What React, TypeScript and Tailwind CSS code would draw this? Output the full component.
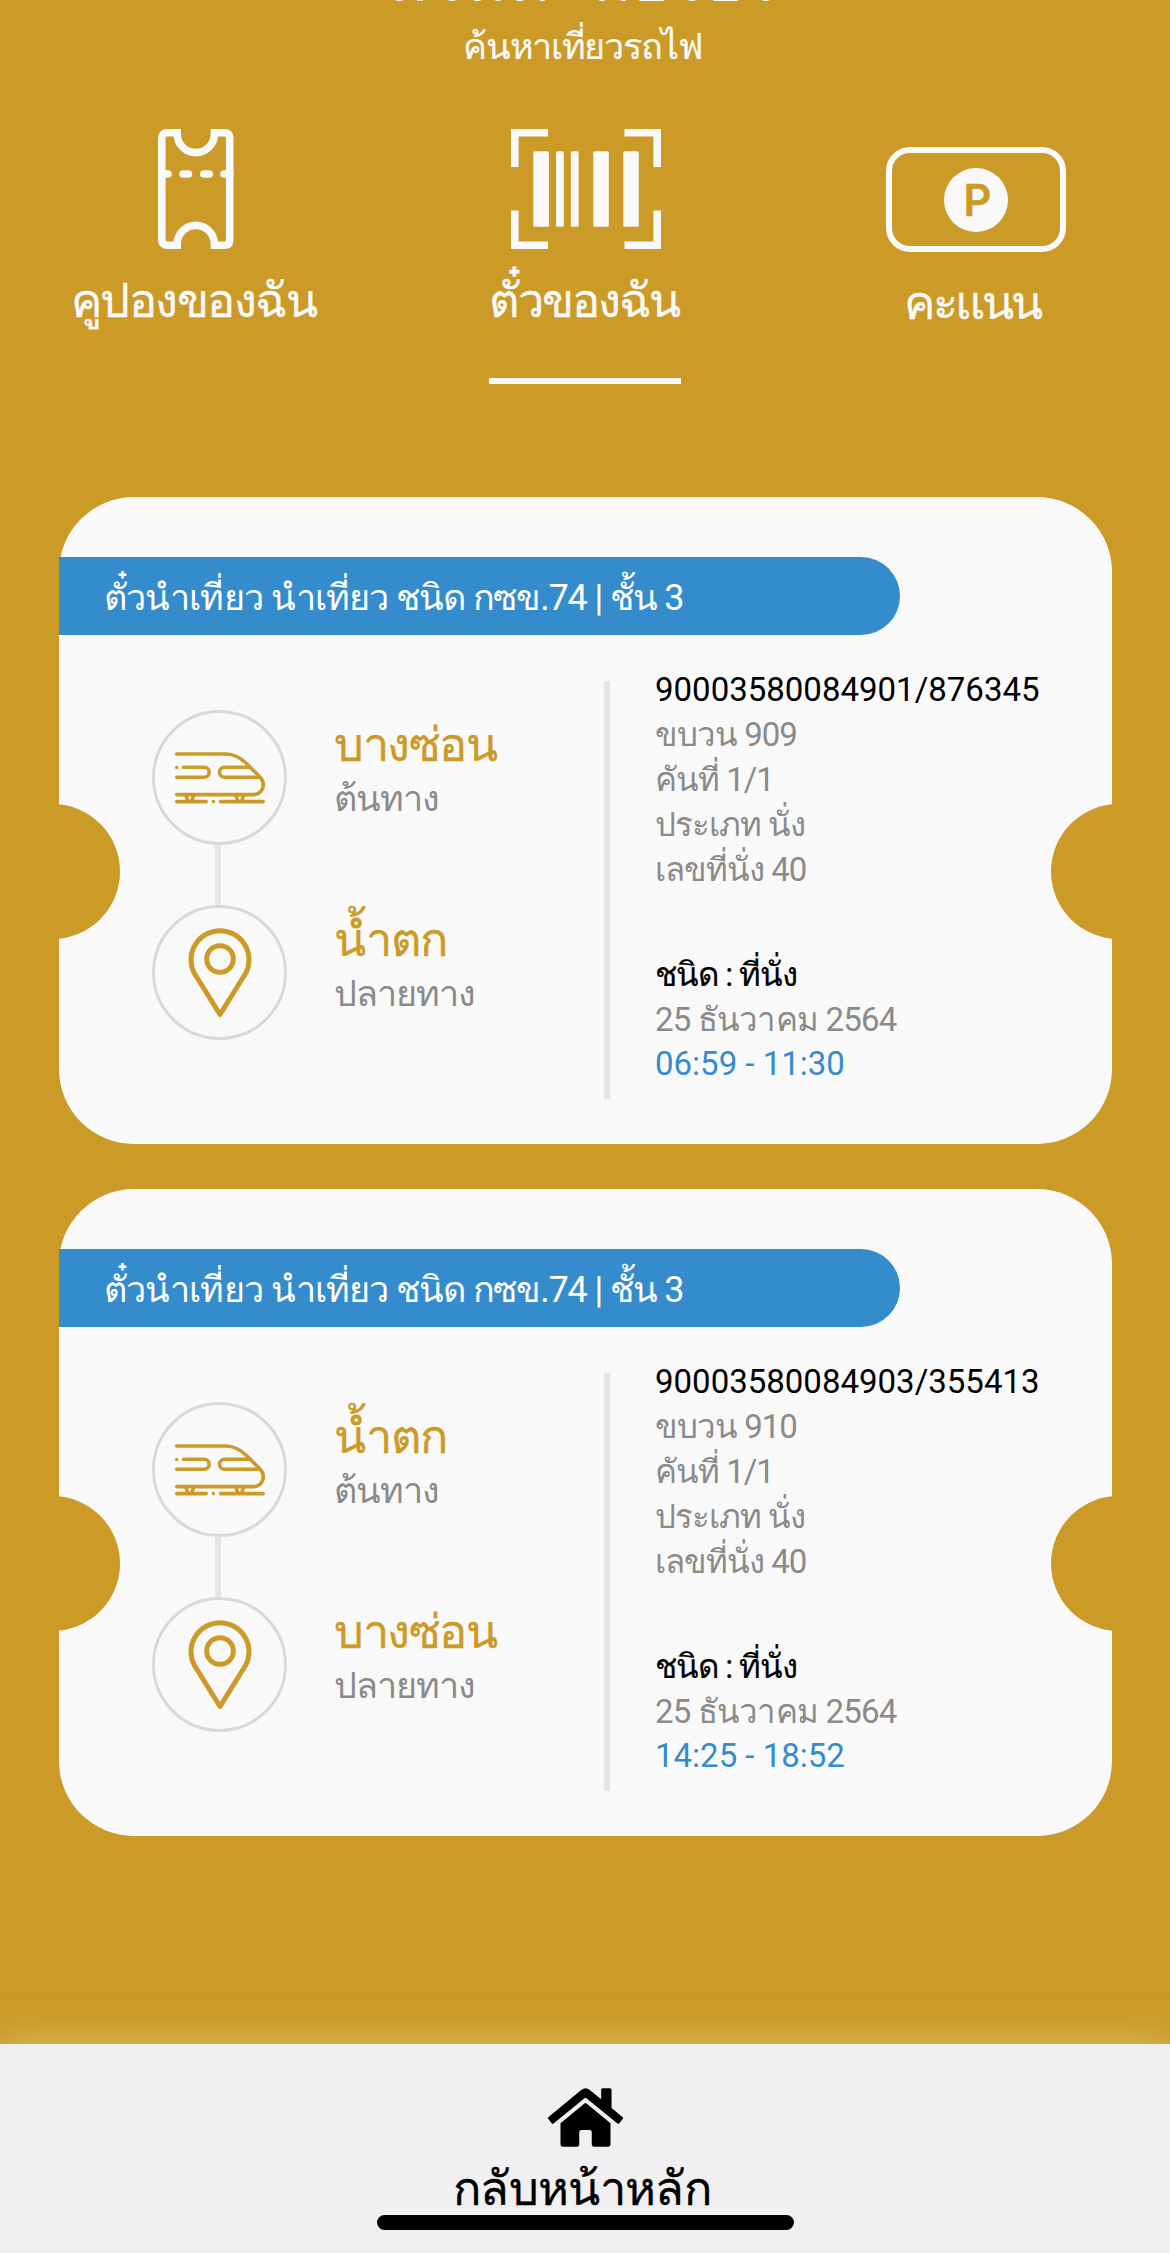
import { FaHome } from "react-icons/fa";

type Ticket = {
  id: string;
  title: string;
  carClass: string;
  from: string;
  to: string;
  details: string[];
  seatType: string;
  date: string;
  time: string;
};

const tickets: Ticket[] = [
  {
    id: "90003580084901/876345",
    title: "ตั๋วนำเที่ยว นำเที่ยว",
    carClass: "ชนิด กซข.74 | ชั้น 3",
    from: "บางซ่อน",
    to: "น้ำตก",
    details: ["ขบวน 909", "คันที่ 1/1", "ประเภท นั่ง", "เลขที่นั่ง 40"],
    seatType: "ชนิด : ที่นั่ง",
    date: "25 ธันวาคม 2564",
    time: "06:59 - 11:30",
  },
  {
    id: "90003580084903/355413",
    title: "ตั๋วนำเที่ยว นำเที่ยว",
    carClass: "ชนิด กซข.74 | ชั้น 3",
    from: "น้ำตก",
    to: "บางซ่อน",
    details: ["ขบวน 910", "คันที่ 1/1", "ประเภท นั่ง", "เลขที่นั่ง 40"],
    seatType: "ชนิด : ที่นั่ง",
    date: "25 ธันวาคม 2564",
    time: "14:25 - 18:52",
  },
];

function CouponIcon() {
  return (
    <svg className="ml-[2px]" width="76" height="120" viewBox="0 0 76 120" fill="none" stroke="currentColor" strokeWidth="7.6">
      <path d="M9 3.8H19.2V5A18.6 18.6 0 0 0 56.4 5V3.8H66.5Q71.7 3.8 71.7 9V111Q71.7 116.2 66.5 116.2H56.4V115A18.6 18.6 0 0 0 19.2 115V116.2H9Q3.8 116.2 3.8 111V9Q3.8 3.8 9 3.8Z" />
      <path d="M4 45H10M25 45H30.5M45.8 45H51.2M66 45H71.7" strokeLinecap="round" />
    </svg>
  );
}

function BarcodeIcon() {
  return (
    <svg className="ml-[2px]" width="150" height="120" viewBox="0 0 150 120" fill="currentColor">
      <path
        d="M3.8 38V3.8H37M113.5 3.8H146.2V38M3.8 81.5V116.2H37M113.5 116.2H146.2V81.5"
        fill="none"
        stroke="currentColor"
        strokeWidth="7.6"
      />
      <rect x="22.3" y="22.3" width="15.6" height="75.4" rx="1.5" />
      <rect x="45" y="22.3" width="7.8" height="75.4" rx="1.5" />
      <rect x="59.8" y="22.3" width="7.8" height="75.4" rx="1.5" />
      <rect x="82.3" y="22.3" width="15.5" height="75.4" rx="1.5" />
      <rect x="112.3" y="22.3" width="15.5" height="75.4" rx="1.5" />
    </svg>
  );
}

function TrainIcon() {
  return (
    <svg width="110" height="75" viewBox="0 0 110 75" fill="none" stroke="currentColor" strokeWidth="3.6" strokeLinecap="round" strokeLinejoin="round">
      <path d="M11.7 14H61C70 14 76 18 82 24L94.5 36.5C101.5 43.5 98 54.6 88 54.6H11.7" />
      <path d="M11.7 27.5h.01M18.5 27.3H39.2A5 5 0 0 1 39.2 37.3H11.7" />
      <path d="M85 27.3H59.5A5 5 0 0 0 59.5 37.3H95" />
      <path d="M21 55.5L22.8 61M28.5 55.5L26.7 61M71 55.5L72.8 61M78.5 55.5L76.7 61" />
      <path d="M11.7 61.6H41.2M48.4 61.6h.01M55.6 61.6H98.2" />
    </svg>
  );
}

function PinIcon() {
  return (
    <svg width="64" height="91" viewBox="0 0 64 91" fill="none" stroke="currentColor" strokeWidth="5" strokeLinejoin="round">
      <path d="M32 87.5L6.5 46.5A29 29 0 1 1 57.5 46.5Z" />
      <circle cx="32" cy="32" r="13.3" />
    </svg>
  );
}

function Stop({ icon, name, label }: { icon: React.ReactNode; name: string; label: string }) {
  return (
    <div className="flex">
      <div className="flex size-[135px] shrink-0 items-center justify-center rounded-full border-[3px] border-[#d8d8da] text-[#cb9a27]">
        {icon}
      </div>
      <div className="ml-[47px] pt-[5px]">
        <div className="mb-[2px] text-[47px] leading-[60px] tracking-[-1.5px] text-[#cb9a27] [-webkit-text-stroke:0.3px]">{name}</div>
        <div className="text-[36px] leading-[45px] tracking-[-1px] text-[#8a8a8a]">{label}</div>
      </div>
    </div>
  );
}

function TicketCard({ ticket }: { ticket: Ticket }) {
  return (
    <div className="relative h-[647px] rounded-[75px] bg-[#f9f9f9] pt-[60px]">
      {/* notches */}
      <div className="absolute top-[307px] -left-[74px] size-[135px] rounded-full bg-[#cb9a27]" />
      <div className="absolute top-[307px] -right-[74px] size-[135px] rounded-full bg-[#cb9a27]" />

      <div className="h-[78px] w-[841px] rounded-r-full bg-[#358ccd] pl-[45px] text-[36px] leading-[83px] tracking-[-0.9px] whitespace-nowrap text-white">
        {ticket.title} <span className="tracking-[-1.15px]">{ticket.carClass}</span>
      </div>

      <div className="flex">
        <div className="w-[545px] pt-[75px] pl-[93px]">
          <Stop icon={<TrainIcon />} name={ticket.from} label="ต้นทาง" />
          <div className="ml-[63px] h-[60px] w-[6px] bg-[#e4e4e6]" />
          <Stop icon={<PinIcon />} name={ticket.to} label="ปลายทาง" />
        </div>
        <div className="mt-[46px] h-[418px] w-[6px] bg-[#e4e4e4]" />
        <div className="mt-[32px] ml-[45px] text-[33px] leading-[45px] tracking-[-1px] whitespace-nowrap text-[#8a8a8a]">
          <div className="tracking-normal text-black">{ticket.id}</div>
          {ticket.details.map((line) => (
            <div key={line}>{line}</div>
          ))}
          <div className="mt-[60px] text-black [-webkit-text-stroke:0.2px]">{ticket.seatType}</div>
          <div className="tracking-[-0.8px]">{ticket.date}</div>
          <div className="-mt-px tracking-normal text-[#358ccd]">{ticket.time}</div>
        </div>
      </div>
    </div>
  );
}

export default function App() {
  return (
    <div className="flex h-[2253px] w-[1170px] flex-col overflow-hidden bg-[#cb9a27] font-['Roboto',sans-serif] text-[#f9f9f9]">
      <header className="flex flex-col items-center [-webkit-text-stroke:0.2px]">
        {/* greeting is scrolled almost out of view */}
        <div className="-mt-[49px] mb-[14px] text-[60px] leading-[60px] tracking-[3px] [word-spacing:24px]">มรมต กอรอร</div>
        <div className="-ml-[5px] text-[36px] leading-[45px] tracking-[-1.3px]">ค้นหาเที่ยวรถไฟ</div>
      </header>

      <nav className="mt-[59px] grid h-[255px] grid-cols-3 text-[47px] leading-[60px] [-webkit-text-stroke:0.3px]">
        <div className="flex flex-col items-center">
          <CouponIcon />
          <span className="mt-[22px] -ml-[3px] tracking-[-1.5px]">คูปองของฉัน</span>
        </div>
        <div className="flex flex-col items-center">
          <BarcodeIcon />
          <span className="mt-[22px] -ml-[2px] tracking-[-2.1px]">ตั๋วของฉัน</span>
          <div className="mt-[47px] h-[6px] w-[192px] bg-[#f9f9f9]" />
        </div>
        <div className="flex flex-col items-center pt-[18px]">
          <div className="ml-[2px] flex h-[105px] w-[180px] items-center justify-center rounded-[24px] border-[6px] border-[#f9f9f9]">
            <div className="flex size-[64px] items-center justify-center rounded-full bg-[#f9f9f9] pl-[3px] font-['Inter'] text-[44px] font-semibold text-[#cb9a27]">
              P
            </div>
          </div>
          <span className="mt-[21px] -ml-[5px] tracking-[-2.8px]">คะแนน</span>
        </div>
      </nav>

      <main className="mt-[113px] mr-[58px] ml-[59px] flex flex-col gap-[45px]">
        {tickets.map((ticket) => (
          <TicketCard key={ticket.id} ticket={ticket} />
        ))}
      </main>

      <footer className="mt-[208px] flex h-[209px] flex-col items-center bg-[#f0f0f2] pt-[40px] text-black shadow-[0_0_36px_rgba(240,235,180,0.5)]">
        <FaHome className="h-[67px] w-[75px]" />
        <span className="mt-[13px] mb-px -ml-[6px] text-[47px] leading-[50px] tracking-[-0.7px] [-webkit-text-stroke:0.3px]">กลับหน้าหลัก</span>
        <div className="h-[15px] w-[417px] rounded-full bg-black" />
      </footer>
    </div>
  );
}
